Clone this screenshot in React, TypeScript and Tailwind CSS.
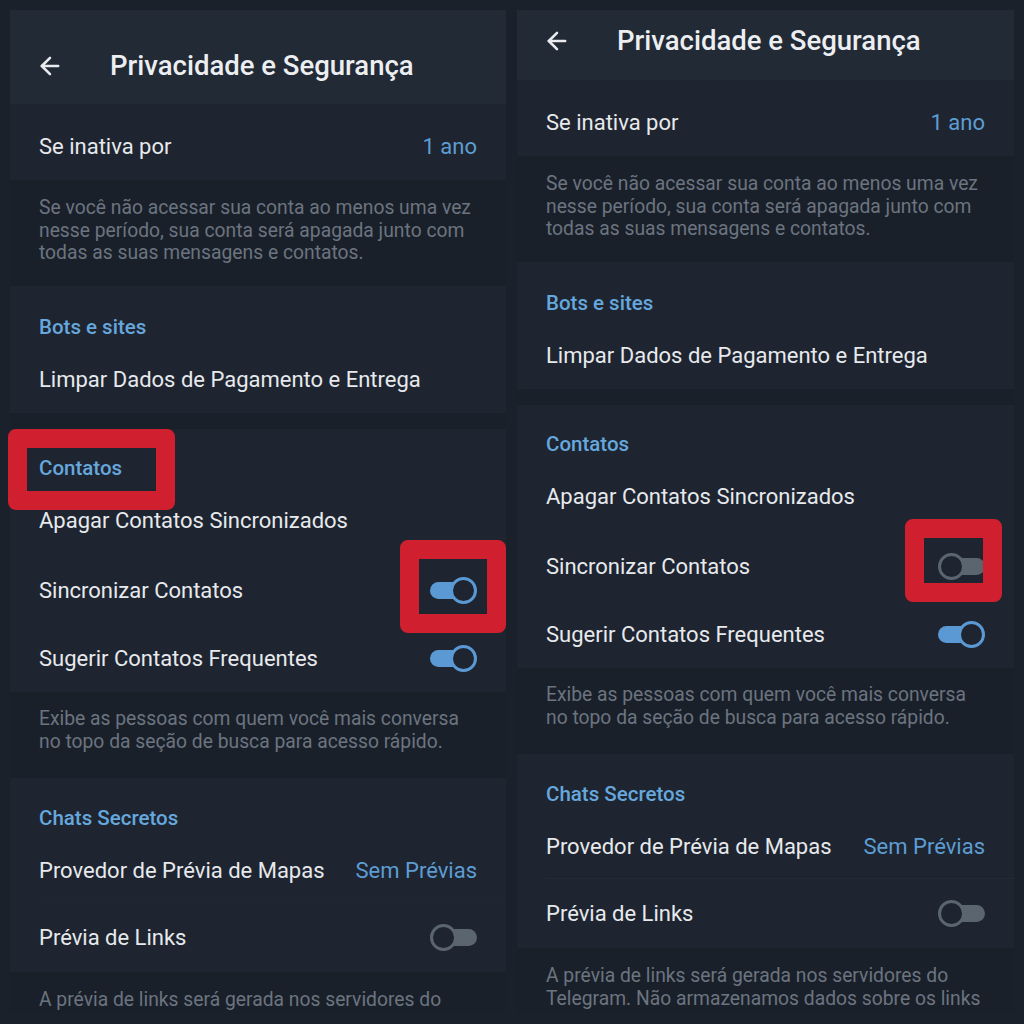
import React from 'react';
import { ArrowLeft } from 'lucide-react';

const Toggle: React.FC<{ on: boolean }> = ({ on }) => (
  <div className="relative w-[47px] h-[27px] flex items-center">
    <div
      className={
        on
          ? 'h-[17px] w-[40px] rounded-full bg-[#5a99d3]'
          : 'h-[17px] w-[40px] ml-[7px] rounded-full bg-[#5b6570]'
      }
    />
    <div
      className={
        on
          ? 'absolute top-0 right-0 w-[27px] h-[27px] rounded-full border-[3px] border-[#5a99d3] bg-[#1e2531]'
          : 'absolute top-0 left-0 w-[27px] h-[27px] rounded-full border-[3px] border-[#5b6570] bg-[#1e2531]'
      }
    />
  </div>
);

const SectionTitle: React.FC<{ children: React.ReactNode }> = ({ children }) => (
  <div className="h-[24px] flex items-center pl-[29px] text-[20.5px] font-medium text-[#66a8dd]">
    {children}
  </div>
);

const Row: React.FC<{ label: string; className: string; right?: React.ReactNode }> = ({
  label,
  className,
  right,
}) => (
  <div className={`flex items-center justify-between pl-[29px] pr-[29px] ${className}`}>
    <span className="text-[22px] text-[#e7e9ec]">{label}</span>
    {right}
  </div>
);

const Value: React.FC<{ children: React.ReactNode }> = ({ children }) => (
  <span className="text-[22px] text-[#5d9dd3]">{children}</span>
);

const Info: React.FC<{ className: string; children: React.ReactNode }> = ({ className, children }) => (
  <div className={`bg-[#1a2029] px-[29px] text-[19.3px] leading-[22.5px] text-[#6b7480] whitespace-nowrap ${className}`}>
    {children}
  </div>
);

const Panel: React.FC<{ tall: boolean; syncOn: boolean; width: string }> = ({ tall, syncOn, width }) => (
  <div className={`${width} h-[1003px] overflow-hidden flex flex-col bg-[#1e2531]`}>
    {/* header */}
    <div
      className={
        tall
          ? 'h-[94px] pt-[18px] shrink-0 flex items-center bg-[#222a36]'
          : 'h-[70px] pb-[8px] shrink-0 flex items-center bg-[#222a36]'
      }
    >
      <div className="w-[100px] pl-[26px] flex items-center">
        <ArrowLeft size={28} strokeWidth={2.2} className="text-[#e9ebee]" />
      </div>
      <span className="text-[27.5px] font-medium text-[#eceef1]">Privacidade e Segurança</span>
    </div>

    <Row label="Se inativa por" className="h-[76px] pt-[8px] shrink-0" right={<Value>1 ano</Value>} />
    <Info className="h-[106px] pt-[17px] shrink-0">
      Se você não acessar sua conta ao menos uma vez
      <br />
      nesse período, sua conta será apagada junto com
      <br />
      todas as suas mensagens e contatos.
    </Info>

    <div className="pt-[29px] pb-[8px] shrink-0">
      <SectionTitle>Bots e sites</SectionTitle>
      <Row label="Limpar Dados de Pagamento e Entrega" className="mt-[14px] h-[52px]" />
    </div>
    <div className="h-[16px] bg-[#1a2029] shrink-0" />

    <div className="pt-[27px] shrink-0">
      <SectionTitle>Contatos</SectionTitle>
      <Row label="Apagar Contatos Sincronizados" className="mt-[14px] h-[52px]" />
      <Row label="Sincronizar Contatos" className="mt-[10px] h-[68px]" right={<Toggle on={syncOn} />} />
      <Row label="Sugerir Contatos Frequentes" className="h-[68px]" right={<Toggle on />} />
    </div>
    <Info className="h-[86px] pt-[16px] shrink-0">
      Exibe as pessoas com quem você mais conversa
      <br />
      no topo da seção de busca para acesso rápido.
    </Info>

    <div className="pt-[28px] shrink-0">
      <SectionTitle>Chats Secretos</SectionTitle>
      <Row label="Provedor de Prévia de Mapas" className="mt-[14px] h-[52px]" right={<Value>Sem Prévias</Value>} />
      <div className="h-[6px]" />
      <div className={tall ? 'h-px ml-[29px] bg-[#1f2733]' : 'h-px ml-[29px] bg-[#232b37]'} />
      <Row label="Prévia de Links" className="h-[69px]" right={<Toggle on={false} />} />
    </div>
    <Info className="flex-1 pt-[17px]">
      A prévia de links será gerada nos servidores do
      {!tall && (
        <>
          <br />
          Telegram. Não armazenamos dados sobre os links
        </>
      )}
    </Info>
  </div>
);

export default function App() {
  return (
    <div className="relative w-[1024px] h-[1024px] bg-[#1b212b] font-['Roboto',sans-serif] flex gap-[11px] pl-[10px] pt-[10px]">
      <Panel tall syncOn width="w-[496px]" />
      <Panel tall={false} syncOn={false} width="w-[497px]" />

      {/* red highlight annotations */}
      <div className="absolute left-[8px] top-[429px] w-[167px] h-[81px] border-[19px] border-[#d01f2e] rounded-[8px]" />
      <div className="absolute left-[400px] top-[540px] w-[106px] h-[93px] border-[19px] border-[#d01f2e] rounded-[8px]" />
      <div className="absolute left-[905px] top-[519px] w-[97px] h-[83px] border-[19px] border-[#d01f2e] rounded-[8px]" />
    </div>
  );
}
